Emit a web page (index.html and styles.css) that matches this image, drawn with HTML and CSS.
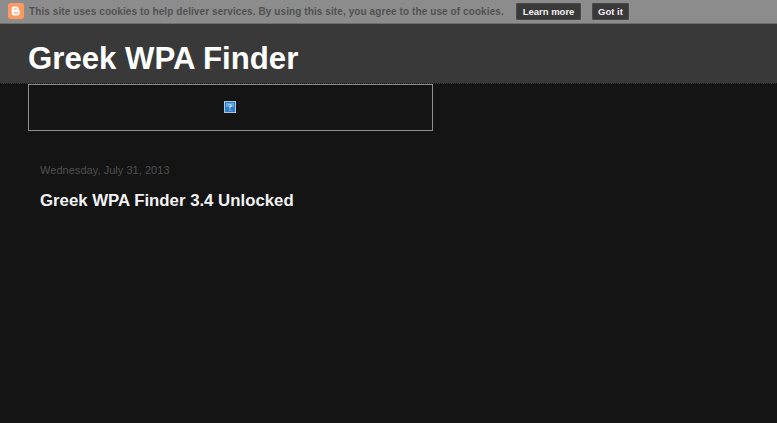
FILE: index.html
```html
<!DOCTYPE html>
<html lang="en">
<head>
<meta charset="utf-8">
<title>Greek WPA Finder</title>
<link rel="stylesheet" href="styles.css">
</head>
<body>
<div class="cookie">
  <svg class="blogger" viewBox="0 0 16 16" width="16" height="16">
    <rect width="16" height="16" rx="2.5" fill="#fb9a5f"/>
    <path d="M5.6 3.5h3a2 2 0 0 1 2 2v1.2h.3a.7.7 0 0 1 .7.7v2.9a2.2 2.2 0 0 1-2.2 2.2H5.9a2.2 2.2 0 0 1-2.2-2.2V5.4a1.9 1.9 0 0 1 1.9-1.9z" fill="#fff"/>
    <rect x="5.6" y="5.5" width="3" height="1.1" fill="#fb9a5f"/>
    <rect x="5.6" y="9.2" width="4.7" height="1.1" fill="#fb9a5f"/>
  </svg>
  <span class="cookie-text">This site uses cookies to help deliver services. By using this site, you agree to the use of cookies.</span>
  <a class="btn btn-learn">Learn more</a>
  <a class="btn btn-got">Got it</a>
</div>
<header class="header">
  <h1 class="site-title">Greek WPA Finder</h1>
</header>
<main class="content">
  <div class="ad-box">
    <svg class="missing" viewBox="0 0 12 12" width="12" height="12">
      <rect x="0.5" y="0.5" width="11" height="11" fill="#2f7fc8" stroke="#a9c6de"/>
      <rect x="2" y="2" width="8" height="4" fill="#5ca4de"/>
      <path d="M4.5 3.5h3v2.5h-1v1.5h-1v-2.5h1v-.7h-2z" fill="#d7e8f5"/>
      <rect x="5.5" y="8.5" width="1" height="1.2" fill="#d7e8f5"/>
    </svg>
  </div>
  <article class="post">
    <div class="date">Wednesday, July 31, 2013</div>
    <h2 class="post-title">Greek WPA Finder 3.4 Unlocked</h2>
  </article>
</main>
</body>
</html>
```
FILE: styles.css
```css
html, body {
  margin: 0;
  height: 423px;
  overflow: hidden;
}
body {
  background: #141414;
  font-family: "Liberation Sans", Arial, sans-serif;
}
.cookie {
  height: 23px;
  background: #8c8c8c;
  border-bottom: 1px solid #6e6e6e;
  display: flex;
  align-items: center;
  padding-left: 8px;
}
.blogger {
  flex: none;
  margin-right: 5px;
  margin-top: -1px;
}
.cookie-text {
  font-size: 10px;
  font-weight: bold;
  letter-spacing: 0.09px;
  color: #525252;
  width: 487px;
  white-space: nowrap;
  flex: none;
}
.btn {
  background: #393939;
  color: #f2f2f2;
  font-size: 9.5px;
  font-weight: bold;
  height: 15px;
  line-height: 15px;
  text-align: center;
  border: 1px solid #4a4a4a;
  border-radius: 1px;
  margin-top: -1px;
}
.btn-learn {
  width: 63px;
}
.btn-got {
  width: 35px;
  margin-left: 11px;
}
.header {
  height: 59px;
  background: #393939;
  border-bottom: 1px dotted #111;
  padding-left: 28px;
  display: flex;
  align-items: center;
}
.site-title {
  margin: 0;
  padding-top: 10px;
  font-size: 31.2px;
  line-height: 37px;
  font-weight: bold;
  color: #fff;
}
.content {
  padding-left: 28px;
}
.ad-box {
  width: 403px;
  height: 45px;
  border: 1px solid #8f8f8f;
  display: flex;
  align-items: center;
  justify-content: center;
}
.missing {
  display: block;
  margin: 0 1px 1px 0;
}
.post {
  padding: 31px 0 0 12px;
}
.date {
  font-size: 11px;
  letter-spacing: 0.04px;
  line-height: 16px;
  color: #505050;
}
.post-title {
  margin: 12px 0 0;
  font-size: 16.8px;
  line-height: 21px;
  font-weight: bold;
  color: #f2f2f2;
}
```
